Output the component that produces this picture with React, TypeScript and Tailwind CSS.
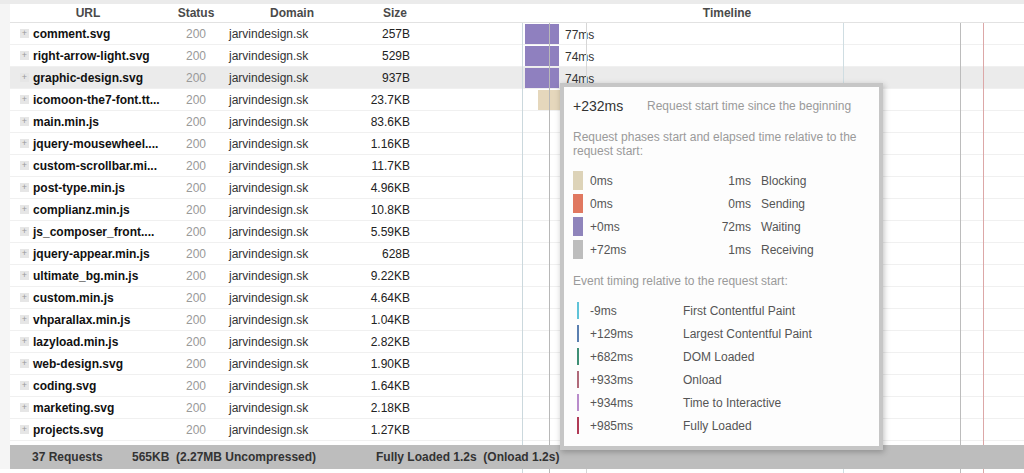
import React from "react";

// Requests shown in the waterfall table
const rows = [
  { url: "comment.svg", size: "257B", bar: "purple", ms: "77ms" },
  { url: "right-arrow-light.svg", size: "529B", bar: "purple", ms: "74ms" },
  { url: "graphic-design.svg", size: "937B", bar: "purple", ms: "74ms", active: true },
  { url: "icomoon-the7-font.tt...", size: "23.7KB", bar: "beige" },
  { url: "main.min.js", size: "83.6KB" },
  { url: "jquery-mousewheel....", size: "1.16KB" },
  { url: "custom-scrollbar.mi...", size: "11.7KB" },
  { url: "post-type.min.js", size: "4.96KB" },
  { url: "complianz.min.js", size: "10.8KB" },
  { url: "js_composer_front....", size: "5.59KB" },
  { url: "jquery-appear.min.js", size: "628B" },
  { url: "ultimate_bg.min.js", size: "9.22KB" },
  { url: "custom.min.js", size: "4.64KB" },
  { url: "vhparallax.min.js", size: "1.04KB" },
  { url: "lazyload.min.js", size: "2.82KB" },
  { url: "web-design.svg", size: "1.90KB" },
  { url: "coding.svg", size: "1.64KB" },
  { url: "marketing.svg", size: "2.18KB" },
  { url: "projects.svg", size: "1.27KB" },
];

const phases = [
  { color: "bg-[#ddd3b8]", start: "0ms", dur: "1ms", name: "Blocking" },
  { color: "bg-[#e07860]", start: "0ms", dur: "0ms", name: "Sending" },
  { color: "bg-[#8f84bb]", start: "+0ms", dur: "72ms", name: "Waiting" },
  { color: "bg-[#bdbdbd]", start: "+72ms", dur: "1ms", name: "Receiving" },
];

const events = [
  { color: "bg-[#5fc3d8]", time: "-9ms", name: "First Contentful Paint" },
  { color: "bg-[#5a7fb0]", time: "+129ms", name: "Largest Contentful Paint" },
  { color: "bg-[#3f8f75]", time: "+682ms", name: "DOM Loaded" },
  { color: "bg-[#b06a7a]", time: "+933ms", name: "Onload" },
  { color: "bg-[#b98ccb]", time: "+934ms", name: "Time to Interactive" },
  { color: "bg-[#b03a56]", time: "+985ms", name: "Fully Loaded" },
];

function Expander() {
  return (
    <span className="w-[9px] h-[9px] bg-[#e6e6e6] text-[#999] text-[9px] leading-[9px] flex items-center justify-center">+</span>
  );
}

function Tooltip() {
  return (
    <div className="absolute left-[560px] top-[83px] w-[323px] h-[367px] border-4 border-[#c6c6c6] bg-[#fdfdfd] shadow-[1px_2px_6px_rgba(0,0,0,0.25)] z-20 pl-[9px] pt-[9px] text-[12px]">
      <div className="flex items-center h-[20px]">
        <span className="w-[74px] text-[14px] text-[#333]">+232ms</span>
        <span className="text-[#9a9a9a]">Request start time since the beginning</span>
      </div>
      <div className="mt-[14px] leading-[14px] text-[#9a9a9a] pr-[14px]">
        Request phases start and elapsed time relative to the request start:
      </div>
      <div className="mt-[11px]">
        {phases.map((p) => (
          <div key={p.name} className="flex items-center h-[23px] text-[#555]">
            <span className={`w-[10px] h-[19px] ${p.color}`}></span>
            <span className="ml-[7px] w-[100px]">{p.start}</span>
            <span className="w-[61px] text-right">{p.dur}</span>
            <span className="ml-[10px]">{p.name}</span>
          </div>
        ))}
      </div>
      <div className="mt-[13px] leading-[14px] text-[#9a9a9a]">Event timing relative to the request start:</div>
      <div className="mt-[11px]">
        {events.map((e) => (
          <div key={e.name} className="flex items-center h-[23px] text-[#555]">
            <span className={`ml-[4px] w-[2px] h-[17px] ${e.color}`}></span>
            <span className="ml-[11px] w-[93px]">{e.time}</span>
            <span>{e.name}</span>
          </div>
        ))}
      </div>
    </div>
  );
}

export default function App() {
  return (
    <div className="relative w-[1024px] h-[473px] overflow-hidden bg-white font-['Liberation_Sans',Arial,sans-serif] text-[12px]">
      <div className="h-[4px] bg-[#ebebeb]"></div>
      <div className="flex">
        <div className="w-[10px] bg-[#f5f5f5]"></div>
        <div className="flex-1 flex flex-col">
          {/* header */}
          <div className="flex h-[19px] items-center border-b border-[#e2e2e2] font-bold text-[#4a4a4a]">
            <div className="w-[156px] text-center">URL</div>
            <div className="w-[60px] text-center">Status</div>
            <div className="w-[132px] text-center">Domain</div>
            <div className="w-[72px] text-right pr-[23px]">Size</div>
            <div className="flex-1 text-center">Timeline</div>
          </div>
          {/* rows */}
          {rows.map((r) => (
            <div
              key={r.url}
              className={`flex h-[22px] items-center border-b border-[#f0f0f0] ${r.active ? "bg-[#ebebeb]" : ""}`}
            >
              <div className="w-[156px] flex items-center pl-[10px] gap-[4px]">
                <Expander />
                <span className="font-bold text-[#111] whitespace-nowrap">{r.url}</span>
              </div>
              <div className="w-[60px] text-center text-[#999]">200</div>
              <div className="w-[132px] pl-[3px] text-[#333]">jarvindesign.sk</div>
              <div className="w-[72px] text-right pr-[20px] text-[#222]">{r.size}</div>
              <div className="flex-1 relative h-full">
                {r.bar === "purple" && (
                  <span className="absolute left-[95px] top-[1px] w-[34px] h-[20px] bg-[#8f80bf]"></span>
                )}
                {r.bar === "beige" && (
                  <span className="absolute left-[108px] top-[1px] w-[22px] h-[20px] bg-[#e5d7bc]"></span>
                )}
                {r.ms && (
                  <span className="absolute left-[135px] top-[3px] text-[#333]">{r.ms}</span>
                )}
              </div>
            </div>
          ))}
          <div className="h-[4px]"></div>
          {/* footer */}
          <div className="relative z-10 flex h-[24px] items-center bg-[#bdbdbd] font-bold text-[#333] pl-[22px] whitespace-pre">
            <span className="w-[100px]">37 Requests</span>
            <span className="w-[244px]">565KB  (2.27MB Uncompressed)</span>
            <span>Fully Loaded 1.2s  (Onload 1.2s)</span>
          </div>
        </div>
      </div>

      {/* timeline markers */}
      <div className="absolute left-[522px] top-[23px] bottom-0 w-px bg-[#cbd8dd] z-[5]"></div>
      <div className="absolute left-[549px] top-[23px] bottom-0 w-px bg-[#b8b8b8] z-[5]"></div>
      <div className="absolute left-[586px] top-[23px] bottom-0 w-px bg-[#d6d6d6] z-[5]"></div>
      <div className="absolute left-[843px] top-[23px] bottom-0 w-px bg-[#cfdde2] z-[5]"></div>
      <div className="absolute left-[960px] top-[23px] bottom-0 w-px bg-[#bcbcbc] z-[5]"></div>
      <div className="absolute left-[983px] top-[23px] bottom-0 w-px bg-[#dca7a7] z-[5]"></div>

      <Tooltip />
    </div>
  );
}
